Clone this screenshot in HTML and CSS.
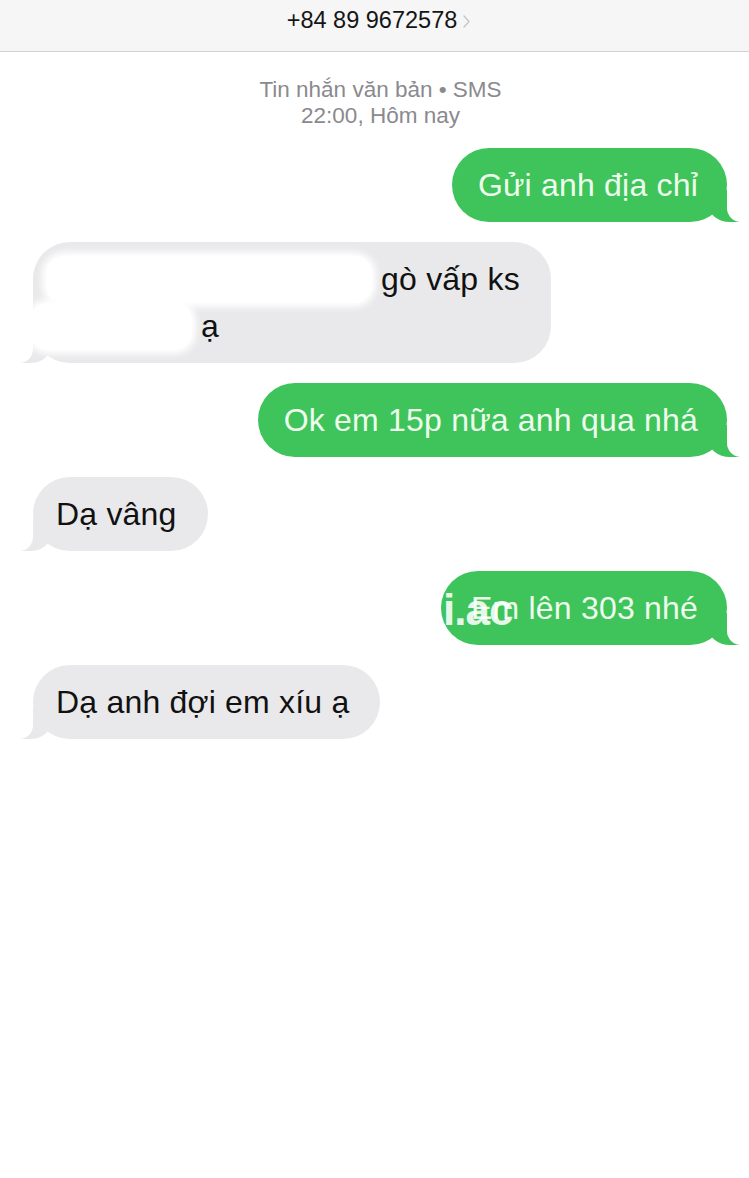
FILE: index.html
```html
<!DOCTYPE html>
<html lang="vi">
<head>
<meta charset="utf-8">
<title>+84 89 9672578</title>
<link rel="stylesheet" href="styles.css">
</head>
<body>
<header class="topbar">
  <span class="contact">+84 89 9672578</span>
  <svg class="chev" width="7" height="13" viewBox="0 0 7 13"><path d="M1 1 L6 6.5 L1 12" fill="none" stroke="#c4c4c8" stroke-width="1.3" stroke-linecap="round" stroke-linejoin="round"/></svg>
</header>
<div class="meta">
  <div>Tin nhắn văn bản • SMS</div>
  <div>22:00, Hôm nay</div>
</div>
<main class="thread">
  <div class="bubble me">Gửi anh địa chỉ</div>
  <div class="bubble them">
    <span class="redact r1"></span> gò vấp ks<br><span class="redact r2"></span> ạ
  </div>
  <div class="bubble me">Ok em 15p nữa anh qua nhá</div>
  <div class="bubble them">Dạ vâng</div>
  <div class="bubble me wide">Em lên 303 nhé<span class="watermark">i.ac</span></div>
  <div class="bubble them">Dạ anh đợi em xíu ạ</div>
</main>
</body>
</html>
```
FILE: styles.css
```css
* { box-sizing: border-box; }
html, body { margin: 0; padding: 0; background: #fff; }
body {
  font-family: "Liberation Sans", Arial, sans-serif;
  color: #111;
  width: 749px;
  min-height: 1178px;
}
.topbar {
  height: 52px;
  background: #f6f6f6;
  border-bottom: 1px solid #d2d2d4;
  display: flex;
  justify-content: center;
  align-items: flex-start;
  padding-top: 7px;
  padding-left: 8px;
  gap: 6px;
}
.contact {
  font-size: 23.5px;
  line-height: 27px;
  color: #151515;
}
.chev { margin-top: 8px; }
.meta {
  margin-top: 25px;
  text-align: center;
  color: #8a8a8e;
  font-size: 22.5px;
  line-height: 26px;
  padding-left: 12px;
}
.thread {
  display: flex;
  flex-direction: column;
  gap: 20px;
  padding: 19px 22px 0 33px;
}
.bubble {
  position: relative;
  font-size: 32px;
  line-height: 47px;
  padding: 14px 29px 13px 23px;
  border-radius: 37px;
  max-width: 530px;
  letter-spacing: 0.2px;
}
.bubble.me {
  align-self: flex-end;
  background: #3ec45b;
  color: #eefced;
  padding-left: 26px;
  padding-right: 29px;
}
.bubble.me.wide { padding-left: 30px; }
.bubble.them {
  align-self: flex-start;
  background: #e9e9eb;
  color: #111;
  padding-right: 31px;
}
.bubble::before, .bubble::after {
  content: "";
  position: absolute;
  bottom: 0;
  height: 32px;
}
.bubble.me::before {
  right: -13px;
  width: 32px;
  background: #3ec45b;
  border-bottom-left-radius: 22px 18px;
}
.bubble.me::after {
  right: -34px;
  width: 34px;
  background: #fff;
  border-bottom-left-radius: 14px;
}
.bubble.them::before {
  left: -13px;
  width: 32px;
  background: #e9e9eb;
  border-bottom-right-radius: 22px 18px;
}
.bubble.them::after {
  left: -34px;
  width: 34px;
  background: #fff;
  border-bottom-right-radius: 14px;
}
.redact {
  display: inline-block;
  vertical-align: top;
  height: 47px;
  background: #fff;
  border-radius: 18px;
  box-shadow: 0 0 7px 4px #fff;
  position: relative;
  z-index: 1;
}
.r1 { width: 326px; margin-left: -10px; }
.r2 { width: 162px; margin-left: -26px; }
.watermark {
  position: absolute;
  left: 2px;
  top: 14px;
  font-size: 44px;
  line-height: 50px;
  font-weight: 700;
  color: rgba(255, 255, 255, 0.88);
  letter-spacing: -1px;
}
```
